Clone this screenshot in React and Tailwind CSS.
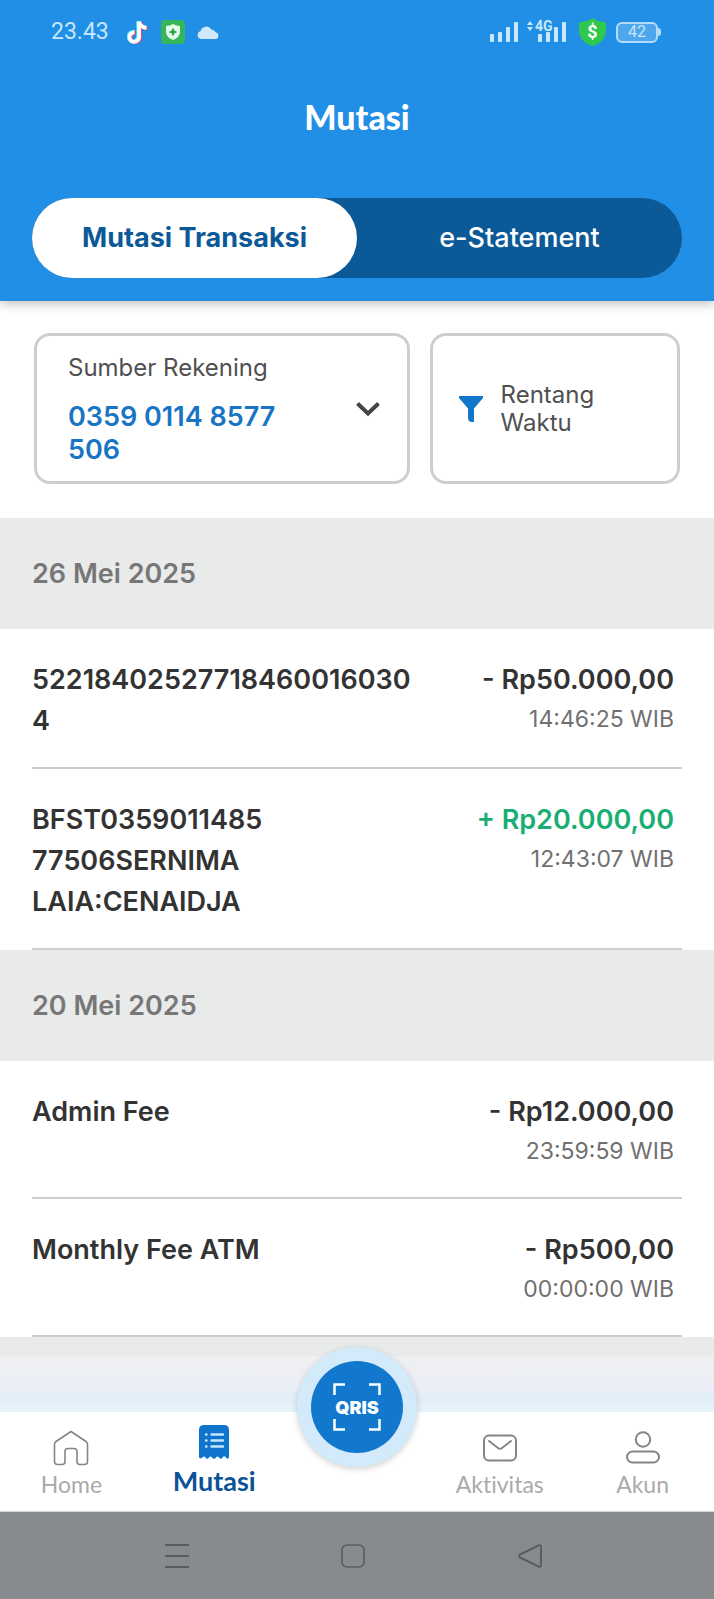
import React, { useState } from "react";

const transactionGroups = [
  {
    date: "26 Mei 2025",
    items: [
      { title: "522184025277184600160304", amount: "- Rp50.000,00", time: "14:46:25 WIB" },
      {
        title: "BFST0359011485\n77506SERNIMA\nLAIA:CENAIDJA",
        amount: "+ Rp20.000,00",
        time: "12:43:07 WIB",
        incoming: true,
      },
    ],
  },
  {
    date: "20 Mei 2025",
    items: [
      { title: "Admin Fee", amount: "- Rp12.000,00", time: "23:59:59 WIB" },
      { title: "Monthly Fee ATM", amount: "- Rp500,00", time: "00:00:00 WIB" },
    ],
  },
];

const HomeIcon = () => (
  <svg width="36" height="36" viewBox="0 0 36 36" fill="none" stroke="#858585" strokeWidth="1.6" strokeLinejoin="round">
    <path d="M18 1.5 33 11.5Q34.5 12.5 34.5 14V31.5Q34.5 34.5 31.5 34.5H27Q24 34.5 24 31.5V21.5Q24 18.5 21 18.5H15Q12 18.5 12 21.5V31.5Q12 34.5 9 34.5H4.5Q1.5 34.5 1.5 31.5V14Q1.5 12.5 3 11.5Z" />
  </svg>
);

const MutasiIcon = () => (
  <svg width="36" height="36" viewBox="0 0 36 36">
    <path d="M8 1H28Q33 1 33 6V33.5L31.5 35 29.5 33Q28 31.5 26.5 33.5 25 36 23 33.5 21.5 31.5 20 33.5 18 36 16 33.5 14.5 31.5 13 33.5 11 36 9.5 33.5 8 31.5 6.5 33.5L4.5 34.5 3 33.5V6Q3 1 8 1Z" fill="#0f75cc" />
    <g stroke="#c5e7fb" strokeWidth="2.4" strokeLinecap="round">
      <path d="M15.5 10.5H27M15.5 16.5H27M15.5 22.5H27M10 10.5H10.5M10 16.5H10.5M10 22.5H10.5" />
    </g>
  </svg>
);

const MailIcon = () => (
  <svg width="36" height="36" viewBox="0 0 36 36" fill="none" stroke="#858585" strokeWidth="2" strokeLinecap="round" strokeLinejoin="round">
    <rect x="2" y="5.5" width="32" height="25" rx="5" />
    <path d="M7 11 16 18Q18 19.5 20 18L29 11" />
  </svg>
);

const AccountIcon = () => (
  <svg width="36" height="36" viewBox="0 0 36 36" fill="none" stroke="#858585" strokeWidth="2">
    <circle cx="18" cy="9.5" r="7.2" />
    <rect x="2" y="21.5" width="32" height="11" rx="5.5" />
  </svg>
);

const StatusBar = () => (
  <div className="flex h-16 items-center justify-between pl-[51px] pr-[53px]">
    <div className="flex items-center">
      <span className="font-[Roboto,sans-serif] text-[23px] text-[#c8e6fb]">23.43</span>
      {/* TikTok */}
      <svg className="ml-[18px]" width="22" height="24" viewBox="0 0 22 24" fill="none" strokeWidth="4">
        <path d="M11 1V16.5A4.8 4.8 0 1 1 6.5 11.7M11 1Q12 6.500 18.5 7.5" stroke="#25e5e8" />
        <path d="M13 2V17.5A4.8 4.8 0 1 1 8.5 12.7M13 2Q14 7.500 20.5 8.5" stroke="#f4436c" />
        <path d="M12 1.5V17A4.8 4.8 0 1 1 7.5 12.2M12 1.5Q13 7 19.5 8" stroke="#fff" />
      </svg>
      {/* Security app */}
      <svg className="ml-3" width="24" height="24" viewBox="0 0 24 24">
        <rect width="24" height="24" rx="4" fill="#35b65a" />
        <path d="M12 4Q15 6 19 6V12Q19 17 12 20 5 17 5 12V6Q9 6 12 4Z" fill="#e3fbe9" />
        <path d="M12 8.5 13 11 15.5 12 13 13 12 15.5 11 13 8.5 12 11 11Z" fill="#2ca34e" stroke="#2ca34e" />
      </svg>
      <svg className="ml-3" width="22" height="13" viewBox="0 0 22 13" fill="#cfe8fb">
        <path d="M4 13A4 4 0 0 1 3.5 5.2 6 6 0 0 1 14.5 3.5 4.5 4.5 0 0 1 18.5 6.3 3.4 3.4 0 0 1 18.5 13Z" />
      </svg>
    </div>

    <div className="flex items-center">
      <svg width="29" height="22" viewBox="0 0 29 22" fill="#c8e9fd">
        <rect y="13" width="4" height="8" rx="1" />
        <rect x="8" y="11" width="4" height="10" rx="1" />
        <rect x="16" y="6" width="4" height="15" rx="1" />
        <rect x="24" y="1" width="4" height="20" rx="1" />
      </svg>
      <svg className="ml-2 overflow-visible" width="40" height="22" viewBox="0 0 40 22" fill="#c8e9fd">
        <path d="M0 4 3 0 6 4ZM0 6 3 10 6 6Z" />
        <text x="8" y="10" fontSize="14" fontWeight="700" fontFamily="Roboto, sans-serif">4G</text>
        <rect x="11" y="13" width="4" height="8" rx="1" />
        <rect x="19" y="11" width="4" height="10" rx="1" />
        <rect x="27" y="6" width="4" height="15" rx="1" />
        <rect x="35" y="1" width="4" height="20" rx="1" />
      </svg>
      <svg className="ml-3" width="27" height="28" viewBox="0 0 27 28">
        <path d="M13.5 0Q18 3.5 27 4.5V14Q26 24 13.5 28 1 24 0 14V4.5Q9 3.5 13.5 0Z" fill="#2fc84f" />
        <text x="13.5" y="20" textAnchor="middle" fontSize="18" fontWeight="700" fontFamily="Roboto, sans-serif" fill="#fff">$</text>
      </svg>
      <div className="ml-[10px] flex items-center">
        <span className="flex h-[21px] w-[42px] items-center justify-center rounded-md border-2 border-[#b4dcf9] bg-[#4ea6ec] font-[Roboto,sans-serif] text-base text-[#c8e6fb]">42</span>
        <span className="h-2 w-[3px] rounded-r bg-[#b4dcf9]" />
      </div>
    </div>
  </div>
);

const TransactionRow = ({ item }) => (
  <li className="mx-8 flex justify-between border-b-2 border-[#cecece] pb-[26px] pr-2 pt-[30px] font-semibold text-[#333333]">
    <p className="w-3/5 whitespace-pre-line break-all text-[27px] leading-[41px]">{item.title}</p>
    <div className="shrink-0 text-right">
      <p className={`text-[27px] leading-[41px] ${item.incoming ? "text-[#1aae74]" : ""}`}>{item.amount}</p>
      <p className="text-[23px] font-normal leading-[39px] text-[#707070]">{item.time}</p>
    </div>
  </li>
);

const NavItem = ({ icon, label, active }) => (
  <a
    href="#"
    aria-current={active ? "page" : undefined}
    className="flex flex-1 flex-col items-center font-[Lato,sans-serif] [font-variant-ligatures:none]"
  >
    <span className={active ? "mt-3" : "mt-[18px]"}>{icon}</span>
    <span
      className={
        active ? "text-[27px] font-bold leading-[42px] text-[#0b5396]" : "text-[23px] leading-9 text-[#aaaaaa]"
      }
    >
      {label}
    </span>
  </a>
);

const App = () => {
  const [tab, setTab] = useState("mutasi");

  const tabs = [
    { id: "mutasi", label: "Mutasi Transaksi" },
    { id: "statement", label: "e-Statement" },
  ];

  return (
    <div className="flex min-h-screen flex-col bg-white font-[Inter,sans-serif]">
      <header className="relative bg-[#208fe5] pb-[23px] shadow-[0_3px_10px_rgba(0,0,0,0.25)]">
        <StatusBar />
        <h1 className="pb-[58px] pt-[30px] text-center font-[Lato,sans-serif] text-[34px] font-black leading-[46px] text-white">
          Mutasi
        </h1>
        <div role="tablist" className="mx-8 flex h-20 rounded-full bg-[#0c5997]">
          {tabs.map((t) => (
            <button
              key={t.id}
              role="tab"
              aria-selected={tab === t.id}
              onClick={() => setTab(t.id)}
              className={`flex-1 rounded-full text-[27px] ${
                tab === t.id ? "bg-white font-bold text-[#0c5997]" : "font-medium text-white"
              }`}
            >
              {t.label}
            </button>
          ))}
        </div>
      </header>

      <main className="flex flex-1 flex-col">
        {/* Filters */}
        <div className="grid grid-cols-[3fr_2fr] gap-5 px-[34px] pb-[34px] pt-8">
          <button
            aria-haspopup="listbox"
            className="flex h-[151px] items-center justify-between rounded-2xl border-[3px] border-[#cecece] pl-[31px] pr-[26px] text-left"
          >
            <span>
              <span className="block text-[24px] leading-8 text-[#505050]">Sumber Rekening</span>
              <span className="mt-4 block w-[220px] text-[27px] font-semibold leading-[33px] text-[#1775c4]">
                0359 0114 8577 506
              </span>
            </span>
            <svg width="26" height="16" viewBox="0 0 26 16" fill="none" stroke="#454545" strokeWidth="4">
              <path d="M2.5 2.5 13 12.5 23.5 2.5" />
            </svg>
          </button>
          <button className="flex h-[151px] items-center gap-[18px] rounded-2xl border-[3px] border-[#cecece] pl-[26px] text-left">
            <svg width="24" height="26" viewBox="0 0 24 26" fill="#1277c9">
              <path d="M0 0H24V2L15 12.5V26H12Q9 25 9 22V12.5L0 2Z" />
            </svg>
            <span className="w-[110px] text-[24px] leading-7 text-[#505050]">Rentang Waktu</span>
          </button>
        </div>

        {transactionGroups.map((group) => (
          <section key={group.date}>
            <h2 className="bg-[#e9ebea] px-8 text-[27px] font-semibold leading-[111px] text-[#777777]">{group.date}</h2>
            <ul>
              {group.items.map((item) => (
                <TransactionRow key={item.title} item={item} />
              ))}
            </ul>
          </section>
        ))}
        <div className="min-h-4 flex-1 bg-[#e9ebea]" />
      </main>

      <footer>
        <div className="h-14 bg-[linear-gradient(#edeff3_30%,#ebeff8_62%,#e3eff6_64%,#e3eff6_84%,#e6f3fa_86%)]" />
        <nav className="relative flex h-[100px] border-b border-[#d5d5d5] bg-white">
          <NavItem icon={<HomeIcon />} label="Home" />
          <NavItem icon={<MutasiIcon />} label="Mutasi" active />
          <div className="flex flex-1 justify-center">
            {/* Scan button, lifted over the bar */}
            <button className="absolute -top-[65px] flex size-[120px] items-center justify-center rounded-full bg-[#d3eafa] shadow-[0_2px_6px_rgba(0,0,0,0.18)]">
              <span className="relative flex size-[92px] items-center justify-center rounded-full bg-[#1178ce] text-[18px] font-black text-white">
                <svg className="absolute" width="48" height="48" viewBox="0 0 48 48" fill="none" stroke="#fff" strokeWidth="2.5">
                  <path d="M1.5 12V1.5H12M36 1.5H46.5V12M46.5 36V46.5H36M12 46.5H1.5V36" />
                </svg>
                QRIS
              </span>
            </button>
          </div>
          <NavItem icon={<MailIcon />} label="Aktivitas" />
          <NavItem icon={<AccountIcon />} label="Akun" />
        </nav>

        {/* System navigation */}
        <div className="flex h-[87px] items-center justify-between bg-[#888b8d] pl-[23%] pr-[24%]">
          <button aria-label="Recent apps">
            <svg width="26" height="26" viewBox="0 0 26 26" stroke="#5b5c60" strokeWidth="2">
              <path d="M1 2H25M1 13H25M1 24H25" />
            </svg>
          </button>
          <button aria-label="Home screen">
            <svg width="26" height="26" viewBox="0 0 26 26" fill="none" stroke="#5b5c60" strokeWidth="1.6">
              <rect x="2" y="2" width="22" height="22" rx="5" />
            </svg>
          </button>
          <button aria-label="Back">
            <svg width="26" height="26" viewBox="0 0 26 26" fill="none" stroke="#5b5c60" strokeWidth="2" strokeLinejoin="round">
              <path d="M3 11.5 21.5 2.5Q24 1.5 24 4V22Q24 24.5 21.5 23.5L3 14.5Q1 13 3 11.5Z" />
            </svg>
          </button>
        </div>
      </footer>
    </div>
  );
};

export default App;
